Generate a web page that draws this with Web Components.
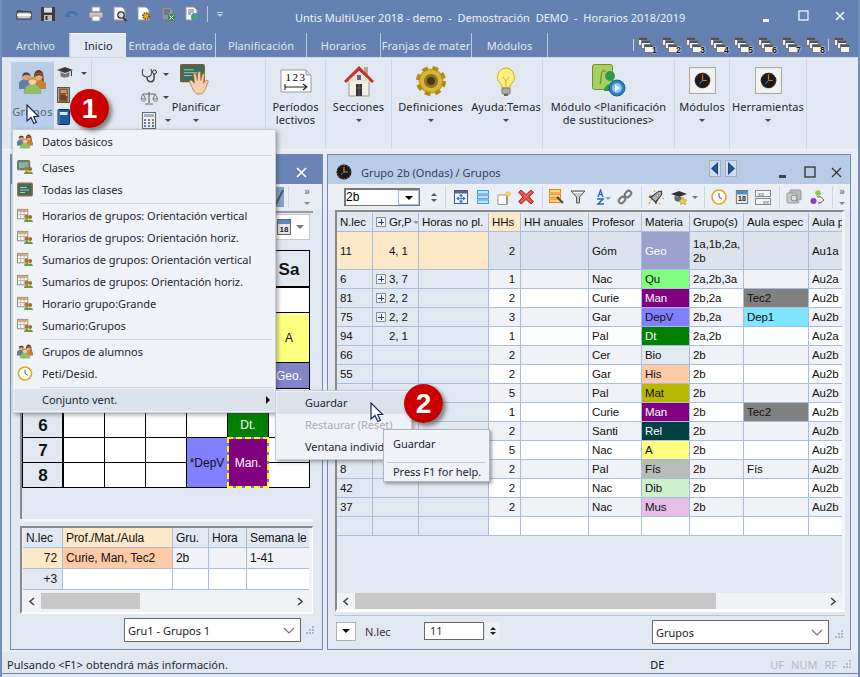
<!DOCTYPE html>
<html lang="es"><head><meta charset="utf-8"><title>Untis MultiUser</title>
<style>
html,body{margin:0;padding:0;background:#e2e8f1}
body{width:860px;height:677px;overflow:hidden;font:11px/13px "Noto Sans","Liberation Sans",sans-serif;color:#1c2733}
</style></head><body>
<x-app>
  <x-titlebar>
    <x-icon n="folder"></x-icon><x-icon n="save"></x-icon><x-icon n="undo"></x-icon><x-icon n="print"></x-icon><x-icon n="preview"></x-icon><x-icon n="docgear"></x-icon><x-icon n="docxl"></x-icon><x-icon n="docglobe"></x-icon>
    <span slot="title">Untis MultiUser 2018 - demo&nbsp; - &nbsp;Demostración&nbsp; DEMO&nbsp; - &nbsp;Horarios 2018/2019</span>
  </x-titlebar>
  <x-tabs>
    <x-tab style="width:64px;padding-right:4px">Archivo</x-tab>
    <x-tab active style="width:56px">Inicio</x-tab>
    <x-tab style="width:90px">Entrada de dato</x-tab>
    <x-tab style="width:91px">Planificación</x-tab>
    <x-tab style="width:74px">Horarios</x-tab>
    <x-tab style="width:91px">Franjas de mater</x-tab>
    <x-tab style="width:76px">Módulos</x-tab>
    <x-winlist slot="right"></x-winlist>
  </x-tabs>
  <x-ribbon>
    <x-rgroup style="width:88px">
      <x-groupbtn></x-groupbtn>
    </x-rgroup>
    <x-rgroup style="width:174px;justify-content:flex-start;padding-left:48px">
      <x-smallcol></x-smallcol>
      <x-rbtn label="Planificar" arrow icon="board" w="33" h="33" style="margin-left:-3px;width:60px"></x-rbtn>
    </x-rgroup>
    <x-rgroup style="width:60px"><x-rbtn label="Períodos|lectivos" icon="period" w="32" h="24"></x-rbtn></x-rgroup>
    <x-rgroup style="width:66px"><x-rbtn label="Secciones" arrow icon="house" w="30" h="32"></x-rbtn></x-rgroup>
    <x-rgroup style="width:151px">
      <x-rbtn label="Definiciones" arrow icon="gear" w="32" h="32" style="width:78px"></x-rbtn>
      <x-rbtn label="Ayuda:Temas" arrow icon="bulb" w="28" h="32" style="width:73px"></x-rbtn>
    </x-rgroup>
    <x-rgroup style="width:132px"><x-rbtn label="Módulo &lt;Planificación|de sustituciones&gt;" icon="module" w="34" h="33"></x-rbtn></x-rgroup>
    <x-rgroup style="width:55px"><x-rbtn label="Módulos" arrow icon="clockbox" w="27" h="27"></x-rbtn></x-rgroup>
    <x-rgroup style="width:77px"><x-rbtn label="Herramientas" arrow icon="clockbox" w="27" h="27"></x-rbtn></x-rgroup>
  </x-ribbon>
  <x-workspace>
    <x-mdi variant="left" style="width:313px">
      <x-wintitle slot="title" variant="left"></x-wintitle>
      <x-lefttool slot="tool"></x-lefttool>
      <x-leftbody></x-leftbody>
    </x-mdi>
    <x-mdi style="width:524px">
      <x-wintitle slot="title" text="Grupo 2b (Ondas) / Grupos" nav></x-wintitle>
      <x-righttool slot="tool"></x-righttool>
      <x-rightbody></x-rightbody>
    </x-mdi>
  </x-workspace>
  <x-status></x-status>

  <x-menu style="left:12px;top:129px;width:264px">
    <x-mi icon="people">Datos básicos</x-mi><x-msep></x-msep>
    <x-mi icon="classwin">Clases</x-mi><x-mi icon="boardsm">Todas las clases</x-mi><x-msep></x-msep>
    <x-mi icon="gridp">Horarios de grupos: Orientación vertical</x-mi>
    <x-mi icon="gridp">Horarios de grupos: Orientación horiz.</x-mi>
    <x-mi icon="gridp">Sumarios de grupos: Orientación vertical</x-mi>
    <x-mi icon="gridp">Sumarios de grupos: Orientación horiz.</x-mi>
    <x-mi icon="gridp">Horario grupo:Grande</x-mi>
    <x-mi icon="gridp">Sumario:Grupos</x-mi><x-msep></x-msep>
    <x-mi icon="people">Grupos de alumnos</x-mi>
    <x-mi icon="clock">Peti/Desid.</x-mi><x-msep></x-msep>
    <x-mi hot sub>Conjunto vent.</x-mi>
  </x-menu>
  <x-menu style="left:275px;top:390px;width:137px">
    <x-mi hot plain>Guardar</x-mi>
    <x-mi off plain>Restaurar (Reset)</x-mi>
    <x-mi plain>Ventana individual</x-mi>
  </x-menu>
  <x-tip style="left:383px;top:429px"></x-tip>
  <x-badge style="left:70px;top:89px">1</x-badge>
  <x-badge style="left:404px;top:384px">2</x-badge>
  <x-cursor style="left:26px;top:104px"></x-cursor>
  <x-cursor style="left:370px;top:402px"></x-cursor>
</x-app>

<script>
const svg=(w,h,s)=>`<svg xmlns="http://www.w3.org/2000/svg" viewBox="0 0 ${w} ${h}" width="100%" height="100%" style="display:block">${s}</svg>`;
const person=(x,y,r,skin,hair,body)=>`<path d="M${x-2*r} ${y+3*r}c0-${1.6*r} ${.8*r}-${2.3*r} ${2*r}-${2.3*r}s${2*r} ${.7*r} ${2*r} ${2.3*r}z" fill="${body}" stroke="#0004" stroke-width=".5"/><circle cx="${x}" cy="${y}" r="${r}" fill="${skin}" stroke="#0003" stroke-width=".4"/><path d="M${x-r} ${y+.3}a${r} ${r} 0 0 1 ${2*r} 0c-.3-1.600-${r}-1.800-${r}-1.800s-${.7*r} .2-${r} 1.800z" fill="${hair}"/>`;
const trio=person(7,6,4,"#d9a07a","#3c3c3c","#5f7fa8")+`<path d="M14.500 6c0-8 9-8 9 0 0 3 1 5-1 6h-7c-2-1-1-3-1-6z" fill="#6e3415"/>`+person(19,6.500,3.800,"#e3ab84","#6e3415","#d07f2c")+person(13,10.500,4,"#f6cfa6","#c89a38","#93c05c");
const grid=()=>`<rect x=".5" y="1.5" width="11" height="10" fill="#fff" stroke="#8a8a80"/><rect x="1" y="2" width="10" height="2.5" fill="#e0b070"/><path d="M4 2v9M7.5 2v9M1 7h10" stroke="#9a9a90" stroke-width=".7"/>`;
const smallp=`<circle cx="10" cy="9" r="2.1" fill="#b5702c"/><circle cx="14" cy="9.5" r="2.1" fill="#a07020"/><path d="M7.5 15c0-4 5-4 5-1.500 0-2 4.500-2 4.500 1.500z" fill="#6f9a38"/>`;
const I={
folder:svg(16,16,`<path d="M1 4h5l1 1h7v2H1z" fill="#555"/><rect x="1" y="6" width="14" height="7" fill="#ccc" stroke="#333"/><path d="M1 9h14" stroke="#fff" stroke-width="2"/>`),
save:svg(16,16,`<rect x="1" y="1" width="14" height="14" fill="#3a3a3a"/><rect x="4" y="1.500" width="8" height="5" fill="#ddd"/><rect x="4" y="9" width="8" height="6" fill="#bbb"/><rect x="5.500" y="10" width="2" height="4" fill="#333"/>`),
undo:svg(16,16,`<path d="M1 9c3-5 9-6 14 0l-3 1c-3-3-5-3-7-1l2 2H1z" fill="#4a6ea8"/>`),
print:svg(16,16,`<rect x="4" y="1" width="8" height="5" fill="#fff" stroke="#999"/><rect x="1" y="6" width="14" height="6" rx="1" fill="#c8c8c8" stroke="#777"/><rect x="4" y="10" width="8" height="5" fill="#fff" stroke="#999"/>`),
preview:svg(16,16,`<path d="M2 1h8l3 3v10H2z" fill="#fff" stroke="#999"/><circle cx="9" cy="9" r="3.200" fill="#cde" stroke="#333" stroke-width="1.300"/><path d="M11 11.500l3.500 3.500" stroke="#333" stroke-width="2"/>`),
docgear:svg(16,16,`<path d="M2 1h8l3 3v10H2z" fill="#fff" stroke="#999"/><circle cx="10" cy="10" r="3" fill="#e0b020" stroke="#805a10" stroke-width="2" stroke-dasharray="1.500 .8"/>`),
docxl:svg(16,16,`<path d="M2 1h8l3 3v10H2z" fill="#8b97a8" stroke="#777"/><path d="M4 4h6M4 6h6M4 8h4" stroke="#556" /><rect x="8" y="8" width="7" height="7" fill="#3d8a55"/><path d="M9.500 9.500l4 4M13.500 9.500l-4 4" stroke="#fff"/>`),
docglobe:svg(16,16,`<path d="M2 1h8l3 3v10H2z" fill="#fff" stroke="#999"/><path d="M4 4h6M4 6h6M4 8h3" stroke="#667"/><circle cx="11" cy="11" r="4" fill="#3f8fc9"/><path d="M8 10c2-2 3 0 4-1s2 2 1 3-3 2-3 0-2 0-2-2z" fill="#5aa83c"/>`),
people:svg(26,23,trio),
cap:svg(16,14,`<path d="M0 4l8-3 8 3-8 3z" fill="#3a3a3a"/><path d="M3.500 6v4c2 2 7 2 9 0V6l-4.500 2z" fill="#777"/><path d="M14.500 5v5" stroke="#333"/>`),
door:svg(13,16,`<rect x=".5" y=".5" width="12" height="15" fill="#aaa" stroke="#555"/><rect x="2" y="1.500" width="9" height="14" fill="#8a5a30"/><rect x="3.500" y="3" width="6" height="3" fill="#c59a6a"/><rect x="3.500" y="8" width="6" height="5" fill="#6f4520"/><circle cx="9.500" cy="8" r=".8" fill="#fd5"/>`),
book:svg(13,16,`<rect x="1" y=".5" width="11.500" height="15" rx="1" fill="#1e5c9e" stroke="#0a2f5a"/><rect x="3" y="3" width="7.500" height="3" fill="#d5e3f2"/><path d="M2 1v14" stroke="#5b93cc"/>`),
stetho:svg(18,16,`<path d="M3 2c-2 5 0 8 4 8s6-3 4-8" fill="none" stroke="#555" stroke-width="1.200"/><path d="M7 10c0 6 6 6 7 2V7" fill="none" stroke="#444" stroke-width="1.500"/><circle cx="14.500" cy="5" r="2" fill="#ddd" stroke="#333"/>`),
scale:svg(18,16,`<path d="M9 2v11M3 4h12M5 14h8" stroke="#666" stroke-width="1.200"/><path d="M3 4l-2 5h5zM15 4l-2 5h5z" fill="none" stroke="#777"/><path d="M1 9a2.500 2.500 0 0 0 5 0zM13 9a2.500 2.500 0 0 0 5 0z" fill="#c8ccd0" stroke="#777" stroke-width=".6"/>`),
calc:svg(14,17,`<rect x=".5" y=".5" width="13" height="16" fill="#eee" stroke="#666"/><rect x="2" y="2" width="10" height="3" fill="#9bb4d0"/><g fill="#6a7a90"><rect x="2" y="7" width="2" height="2"/><rect x="6" y="7" width="2" height="2"/><rect x="10" y="7" width="2" height="2" fill="#d06a3a"/><rect x="2" y="10" width="2" height="2"/><rect x="6" y="10" width="2" height="2"/><rect x="10" y="10" width="2" height="2" fill="#3aa060"/><rect x="2" y="13" width="2" height="2"/><rect x="6" y="13" width="2" height="2"/><rect x="10" y="13" width="2" height="2" fill="#3a70c0"/></g>`),
board:svg(34,34,`<rect x=".8" y="1" width="24" height="17" rx="1" fill="#3f6b5a" stroke="#7a5a36" stroke-width="1.800"/><path d="M4 6h10M4 9h14M4 12h8" stroke="#a8cbb8"/><path d="M11 21c-2-3-1-5 1-4l3 3-1-9c0-2 2-2 2.500 0l1.500 6 .5-8c.5-1.500 2.500-1.500 2.500 0l.5 8 1.500-6c.6-1.500 2.500-1 2.200.5L24 20l3-3c1.500-.8 2.500.5 1.800 1.800-1.500 3-2.300 8-4.800 10.500-3 3-8 2-10-2z" fill="#f3d0b0" stroke="#b5703c" stroke-width=".8"/>`),
period:svg(32,24,`<path d="M1 1h25l5 5v17H1z" fill="#fff" stroke="#999"/><path d="M26 1v5h5" fill="#ddd" stroke="#999"/><text x="16" y="12" text-anchor="middle" font-family="Liberation Serif" font-size="11" letter-spacing="1.500" fill="#000">123</text><path d="M5 18h21M23 15l4 3-4 3M5 15v6" fill="none" stroke="#222" stroke-width="1.100"/>`),
house:svg(30,32,`<rect x="20" y="2" width="4" height="8" fill="#bfa58c"/><path d="M5 15h20v16H5z" fill="#f0efe8" stroke="#999"/><path d="M0 16L15 1l15 15-2 2L15 6 2 18z" fill="#c23030"/><path d="M15 6L5 15v2h20v-2z" fill="#e8e4d8"/><rect x="12" y="19" width="6" height="12" fill="#333"/><rect x="13" y="10" width="4" height="5" fill="#667"/><path d="M12 23h6M15 19v12" stroke="#888" stroke-width=".6"/>`),
gear:svg(32,32,`<circle cx="16" cy="16" r="12.500" fill="#c9a227" stroke="#b08a18" stroke-width="5" stroke-dasharray="5.500 4.500"/><circle cx="16" cy="16" r="11" fill="#d8b43a"/><circle cx="16" cy="16" r="7" fill="#8a7428"/><circle cx="16" cy="16" r="4" fill="#473a12"/>`),
bulb:svg(28,32,`<g stroke="#f6ecb0" stroke-width="1"><path d="M14 0v3M3 5l3 3M25 5l-3 3M0 14h4M24 14h4M4 23l3-2M24 23l-3-2"/></g><path d="M14 3a9 9 0 0 0-5 16c1 1 1 3 1 4h8c0-1 0-3 1-4a9 9 0 0 0-5-16z" fill="#fdf07c" stroke="#d0a830"/><path d="M11 12l3 4 3-4M14 16v6" fill="none" stroke="#d89a20" stroke-width=".8"/><rect x="10" y="23" width="8" height="6" rx="1" fill="#aaa" stroke="#777"/><rect x="12" y="29" width="4" height="2" fill="#666"/>`),
module:svg(34,33,`<rect x=".5" y=".5" width="20" height="25" rx="2" fill="#a9d05e" stroke="#6b8f30"/><path d="M8 20c2-4 0-9 2-12 1-2 3-2 3 0" fill="none" stroke="#6b8f30" stroke-width="1.200"/><circle cx="18" cy="12" r="5" fill="#2e9a4a"/><path d="M12 27c0-9 12-9 12 0z" fill="#2e9a4a"/><circle cx="25" cy="24" r="8" fill="#2e7fc4" stroke="#1e5c98"/><circle cx="25" cy="24" r="5" fill="#8cc4ee"/><path d="M23 20.500l5 3.500-5 3.500z" fill="#fff"/>`),
clockbox:svg(26,26,`<rect x=".5" y=".5" width="25" height="25" fill="#f2f2f2" stroke="#aaa"/><circle cx="13" cy="13" r="7.500" fill="#1a1a1a"/><path d="M13 7v6h4" stroke="#d07820" stroke-width="1.200" fill="none"/><path d="M13 13l-3 3" stroke="#3878c8"/><circle cx="13" cy="13" r="7" fill="none" stroke="#6a4a2a" stroke-dasharray="1 2"/>`),
clockball:svg(16,16,`<circle cx="8" cy="8" r="7.500" fill="#1a1a1a"/><path d="M8 3v5h4" stroke="#e08020" stroke-width="1.200" fill="none"/><path d="M8 8l-3 3" stroke="#3878c8"/><circle cx="8" cy="8" r="6.500" fill="none" stroke="#8a6a3a" stroke-dasharray="1 2"/>`),
clock:svg(16,16,`<circle cx="8" cy="8" r="7" fill="#fff" stroke="#d8a820" stroke-width="1.600"/><path d="M8 4v4l3 2" stroke="#555" fill="none"/>`),
boardsm:svg(16,14,`<rect x=".8" y=".8" width="14.400" height="12.400" rx="1" fill="#3f6b5a" stroke="#8a6a40" stroke-width="1.400"/><path d="M3 5h7M3 7.500h9M3 10h5" stroke="#a8cbb8"/>`),
classwin:svg(17,16,`<rect x=".5" y=".5" width="13" height="10" rx="1" fill="#5a8a78" stroke="#7a6a50"/><rect x="2" y="2.500" width="10" height="6" fill="#8fb0a4"/>${smallp}`),
gridp:svg(17,16,grid()+smallp),
move:svg(14,14,`<rect x=".5" y=".5" width="13" height="13" fill="#eef3fa" stroke="#557"/><rect x="1" y="1" width="12" height="2.500" fill="#4a6a98"/><path d="M7 4.500v8M3 8.500h8M7 4.500L5.500 6h3zM7 12.500L5.500 11h3zM3 8.500l1.500-1.500v3zM11 8.500L9.500 7v3z" stroke="#2a70c0" fill="#2a70c0" stroke-width=".8"/>`),
rows:svg(12,14,`<g fill="#bfe3ff" stroke="#3fa0e0"><rect x=".5" y=".5" width="11" height="3.500"/><rect x=".5" y="5.200" width="11" height="3.500"/><rect x=".5" y="10" width="11" height="3.500"/></g>`),
newdoc:svg(15,15,`<path d="M1 5h9v9.500H1z" fill="#fff" stroke="#999"/><path d="M10 5v9" stroke="#666"/><circle cx="11" cy="4" r="2.200" fill="#ffe040" stroke="#f0a020" stroke-dasharray="1 .6"/>`),
redx:svg(16,16,`<path d="M3 1l5 4.500L13 1l2.500 2.500L11 8l4.500 4.500L13 15 8 10.500 3 15 .5 12.500 5 8 .5 3.500z" fill="#e04848" stroke="#b03030"/><path d="M3 3l10 10M13 3L3 13" stroke="#f08080" stroke-width=".8"/>`),
rowsedit:svg(16,16,`<g fill="#ffd080" stroke="#e88a10"><rect x=".5" y=".5" width="11" height="3.500"/><rect x=".5" y="5.200" width="11" height="3.500"/><rect x=".5" y="10" width="11" height="3.500"/></g><path d="M8 8l6 6" stroke="#444" stroke-width="2"/>`),
funnel:svg(16,14,`<path d="M1 1h14L9.500 7v6h-3V7z" fill="#ccc" stroke="#555"/><path d="M3 2.500h10" stroke="#fff"/>`),
sortaz:svg(16,16,`<path d="M3 8l2.500-7L8 8M4 5.500h3" fill="none" stroke="#2a6ab0" stroke-width="1.300"/><path d="M2 10h6l-5 5h6" fill="none" stroke="#2a6ab0" stroke-width="1.500"/><path d="M10 8h6l-3 3z" fill="#7aa8d8"/>`),
link:svg(16,16,`<g fill="none" stroke="#777" stroke-width="2"><rect x="1.500" y="8.500" width="7" height="5" rx="2.500" transform="rotate(-45 5 11)"/><rect x="7.500" y="2.500" width="7" height="5" rx="2.500" transform="rotate(-45 11 5)"/></g>`),
rocket:svg(16,16,`<g transform="rotate(45 8 8)"><path d="M8 0c3 2 3 5 3 8v4H5V8c0-3 0-6 3-8z" fill="#b4b4b4" stroke="#333"/><path d="M5 9l-2 4 2-1zM11 9l2 4-2-1z" fill="#555" stroke="#333" stroke-width=".6"/><circle cx="8" cy="6" r="1.300" fill="#fff" stroke="#333" stroke-width=".6"/></g><path d="M1 6l2 1M6 1l1 2M11 14l1 1.500M2 13l-1 2M4 11l-2 0M14 9l2 1" stroke="#e8a020" stroke-width="1.200"/>`),
capstar:svg(17,15,`<path d="M0 4l8-3 8 3-8 3z" fill="#333"/><path d="M3.500 6v4c2 2 5 2 7 1V7z" fill="#666"/><path d="M12 7l1.200 2.600 2.800.3-2 2 .6 2.800-2.600-1.400-2.600 1.400.6-2.800-2-2 2.800-.3z" fill="#f5d020" stroke="#a08010" stroke-width=".5"/>`),
cal:svg(14,16,`<rect x=".5" y=".5" width="13" height="15" fill="#e8e8e8" stroke="#666"/><rect x="1" y="1" width="12" height="4" fill="#5a8ac0"/><text x="7" y="13" text-anchor="middle" font-family="Liberation Sans" font-weight="700" font-size="8" fill="#222">18</text>`),
xx:svg(16,15,`<rect x=".5" y=".5" width="15" height="6" fill="#f4f4f4" stroke="#888"/><rect x=".5" y="8.500" width="15" height="6" fill="#f4f4f4" stroke="#888"/><text x="3" y="6" font-family="Liberation Sans" font-size="6" fill="#555">xx</text><text x="8" y="14" font-family="Liberation Sans" font-size="6" fill="#555">xx</text>`),
search:svg(16,16,`<rect x="4" y="1" width="11" height="10" rx="1" fill="#bbb" stroke="#999"/><rect x="1" y="4" width="10" height="10" rx="1" fill="#ccc" stroke="#999"/><circle cx="8" cy="9" r="3" fill="#ddd" stroke="#888"/><path d="M10 11l3 3" stroke="#999" stroke-width="1.500"/>`),
ballp:svg(15,15,`<circle cx="8" cy="3" r="2.800" fill="#8ccc3c"/><circle cx="3.500" cy="11" r="3" fill="#8a3cc0"/><path d="M7 7c4-1 5 1 7 3-2 2-3 3-6 3" fill="none" stroke="#555"/>`),
win:svg(16,16,`<rect x=".5" y=".5" width="9" height="8" fill="#eee" stroke="#777"/><rect x="1" y="1" width="8" height="2" fill="#456"/><rect x="3.500" y="3.500" width="9" height="8" fill="#eee" stroke="#777"/><rect x="4" y="4" width="8" height="2" fill="#456"/><rect x="6.500" y="7.500" width="9" height="8" fill="#f4f4f4" stroke="#777"/><rect x="7" y="8" width="8" height="2" fill="#456"/>`)
};
const tri=(c='#444',s=4)=>`<span style="display:inline-block;width:0;height:0;border:${s}px solid transparent;border-top:${s}px solid ${c};border-bottom:0"></span>`;
function def(name,css,html,init){customElements.define(name,class extends HTMLElement{connectedCallback(){if(this.shadowRoot)return;const r=this.attachShadow({mode:'open'});r.innerHTML=`<style>${css}</style>`+(typeof html==='function'?html(this):html);init&&init(this,r);}});}

def('x-icon',`:host{display:block;flex:none}`,h=>I[h.getAttribute('n')]||'',(h)=>{h.style.width=(h.getAttribute('w')||16)+'px';h.style.height=(h.getAttribute('h')||h.getAttribute('w')||16)+'px';});

def('x-app',`:host{display:flex;flex-direction:column;position:relative;width:860px;height:677px;background:#e2e8f1;overflow:hidden}
:host::after{content:"";position:absolute;left:0;right:0;top:0;bottom:0;border-left:2px solid #7390bb;border-right:2px solid #7390bb;pointer-events:none;z-index:9}`,`<slot></slot>`);

def('x-titlebar',`:host{display:flex;align-items:center;height:33px;flex:none;background:#6481b1;box-sizing:border-box;padding:0 0 5px 16px;color:#eef3fa}
.q{display:flex;gap:8px;width:191px;flex:none}.sep{width:1px;height:16px;background:#b9c8de;flex:none}.dd{margin-left:9px;flex:none;display:flex;flex-direction:column;align-items:center;gap:1px}
.dd i{display:block;width:6px;height:1px;background:#b9c8de}
.t{margin-left:72px;margin-top:6px;font-size:11px;white-space:nowrap;flex:none;width:388px}
.c{margin-left:auto;display:flex;align-items:center;width:110px;flex:none;height:16px;margin-top:4px}
.c svg{display:block;flex:none}`,
`<div class="q"><slot></slot></div><span class="sep"></span><span class="dd"><i></i>${tri('#b9c8de',3)}</span><span class="t"><slot name="title"></slot></span><span class="c"><svg width="10" height="4" style="margin:8px 0 0 13px"><rect y="1" width="6" height="3" fill="#fff"/></svg><svg width="12" height="12" style="margin-left:25px"><rect x="1" y="1" width="9" height="9" fill="none" stroke="#fff" stroke-width="1.200"/></svg><svg width="12" height="12" style="margin-left:24px"><path d="M2 2l8 8M10 2l-8 8" stroke="#fff" stroke-width="1.500"/></svg></span>`);

def('x-tabs',`:host{display:flex;height:24px;flex:none;background:#6481b1;padding-left:6px;position:relative;align-items:flex-end}.r{margin-left:auto}`,`<slot></slot><span class="r"><slot name="right"></slot></span>`);
def('x-tab',`:host{display:flex;align-items:center;justify-content:center;height:24px;box-sizing:border-box;color:#dfe8f4;font-size:11px;border-right:1px solid #bcc9dc;overflow:hidden;white-space:nowrap;flex:none;letter-spacing:.1px}
:host([active]){background:#e2e8f1;color:#1c2733;border-right:0;border-top:1px solid #f4f6fa;border-left:1px solid #d8e0ec}`,`<slot></slot>`);
def('x-winlist',`:host{display:flex;height:24px;align-items:center;padding-right:10px}.s{width:1px;height:12px;background:#c8d4e6}.w{position:relative;width:16px;height:16px;margin-left:8px}.w b{position:absolute;right:-3px;bottom:-2px;font:700 9px/9px "Liberation Sans";color:#111;text-shadow:0 0 1px #fff,0 0 1px #fff,0 0 2px #fff}`,
`<span class="s"></span>`+[1,2,3,4,5,6,7,8].map((n,i)=>`<span class="w" style="margin-left:${i?8:4}px"><x-icon n="win"></x-icon><b>${n}</b></span>`).join('')+`<span class="s" style="margin-left:6px"></span><span class="w" style="margin-left:5px"><x-icon n="win"></x-icon></span>`);

def('x-ribbon',`:host{display:flex;height:93px;flex:none;background:#e2e8f1;padding-left:4px;box-sizing:border-box;border-bottom:1px solid #f2f4f8;box-shadow:inset 0 1px 0 #cfd8e6}`,`<slot></slot>`);
def('x-rgroup',`:host{display:flex;flex:none;justify-content:center;box-sizing:border-box;border-right:1px solid #cdd5e0;height:90px;margin-top:2px}`,`<slot></slot>`);
def('x-rbtn',`:host{display:flex;flex-direction:column;align-items:center;flex:none;width:100%;letter-spacing:.08px;color:#1c2733;white-space:nowrap;text-align:center}
.i{height:41px;display:flex;align-items:center;justify-content:center;padding-top:2px;box-sizing:border-box}.l{line-height:13px}.a{margin-top:5px;line-height:0}`,
h=>`<div class="i"><x-icon n="${h.getAttribute('icon')}" w="${h.getAttribute('w')}" h="${h.getAttribute('h')}"></x-icon></div>`+h.getAttribute('label').split('|').map(t=>`<div class="l">${t.replace(/</g,'&lt;')}</div>`).join('')+(h.hasAttribute('arrow')?`<div class="a">${tri('#444',3)}</div>`:''));
def('x-groupbtn',`:host{display:flex;width:100%;position:relative;height:100%}
.g{width:43px;margin:3px 0 0 7px;background:#b9cde8;height:87px;display:flex;flex-direction:column;align-items:center;color:#56677c;letter-spacing:.45px;flex:none}
.g .p{margin-top:8px;height:30px}.g .l{margin-top:5px}
.s{margin-left:3px;display:flex;flex-direction:column}.r{display:flex;align-items:center;height:22px;gap:8px}`,
`<div class="g"><div class="p"><x-icon n="people" w="27" h="24"></x-icon></div><div class="l">Grupos</div></div><div class="s"><div class="r" style="margin-top:3px"><x-icon n="cap" w="16" h="14"></x-icon>${tri('#444',3)}</div><div class="r"><x-icon n="door" w="13" h="16"></x-icon></div><div class="r"><x-icon n="book" w="13" h="16"></x-icon></div></div>`);
def('x-smallcol',`:host{display:flex;flex-direction:column;padding-top:4px;flex:none;width:29px}.r{display:flex;align-items:center;gap:5px;height:23px}`,
`<div class="r"><x-icon n="stetho" w="18" h="16"></x-icon>${tri('#444',3)}</div><div class="r"><x-icon n="scale" w="18" h="16"></x-icon>${tri('#444',3)}</div><div class="r"><x-icon n="calc" w="14" h="17" style="margin:0 4px 0 2px;"></x-icon>${tri('#444',3)}</div>`);

def('x-workspace',`:host{display:flex;gap:4px;height:497px;flex:none;padding:4px 0 0 10px;background:#e8edf4;box-sizing:content-box}`,`<slot></slot>`);
def('x-mdi',`:host{display:flex;flex-direction:column;flex:none;box-sizing:border-box;height:496px;border:1px solid #6f8cb8;background:#e2e8f1;overflow:hidden}`,`<slot name="title"></slot><slot name="tool"></slot><slot></slot>`);
def('x-wintitle',`:host{display:flex;align-items:center;height:29px;flex:none;box-sizing:border-box;padding-top:5px;background:#b8cce6;color:#33405c;font-size:11px;padding-left:8px;white-space:nowrap}
:host([variant=left]){background:#6a85b5;color:#fff;padding-top:0}
.t{margin-left:9px;width:348px}.n{display:flex;gap:4px;width:70px;margin-top:-8px}.n span{width:12px;height:17px;box-sizing:border-box;border:1px solid #a8aeb8;background:#cddcf0;display:flex;align-items:center;justify-content:center}
.b{display:flex;align-items:center}.left{margin-left:auto;padding-right:15px}`,
h=>h.getAttribute('variant')==='left'?`<span class="left"><svg width="11" height="11" style="display:block;margin-top:6px"><path d="M1 1l9 9M10 1l-9 9" stroke="#fff" stroke-width="1.700"/></svg></span>`:
`<x-icon n="clockball"></x-icon><span class="t">${h.getAttribute('text')}</span><span class="n"><span><svg width="8" height="13"><path d="M7 0v13L0 6.500z" fill="#2233cc"/><path d="M6 3v7L2 6.500z" fill="#108010"/></svg></span><span><svg width="8" height="13"><path d="M1 0v13l7-6.500z" fill="#2233cc"/><path d="M2 3v7l4-3.500z" fill="#108010"/></svg></span></span><span class="b"><svg width="8" height="4" style="margin:7px 0 0 0"><rect y="1" width="7" height="3" fill="#444"/></svg><svg width="13" height="13" style="margin-left:17px"><rect x="1" y="1" width="10" height="10" fill="none" stroke="#333" stroke-width="1.300"/></svg><svg width="11" height="11" style="margin-left:14px"><path d="M1 1l9 9M10 1l-9 9" stroke="#333" stroke-width="1.300"/></svg></span>`);

const more=`<span style="display:flex;flex-direction:column;align-items:center;gap:6px;color:#778;font:700 10px/8px 'Liberation Sans';margin-top:-2px">»${tri('#888',3)}</span>`;
const sep=(l)=>`<span style="width:1px;height:22px;background:#ccd4df;margin-left:${l}px;flex:none"></span>`;
def('x-lefttool',`:host{display:flex;align-items:center;height:26px;flex:none;justify-content:flex-end;padding-right:12px;box-sizing:border-box;background:#e8edf4}
.h{width:8px;height:20px;background:#7ba2d0;margin-right:4px;overflow:hidden;display:block}`,`<span class="h"><svg width="8" height="20"><path d="M0 17L7 3" stroke="#555" stroke-width="2"/></svg></span>${sep(0)}<span style="margin-left:15px">${more}</span>`);
def('x-righttool',`:host{display:flex;align-items:center;height:26px;flex:none;box-sizing:border-box;background:#eaeff5;padding-left:16px}
.cb{display:flex;width:76px;height:18px;box-sizing:border-box;border:2px solid #777;border-right-width:1px;border-bottom-width:1px;background:#fff;font:12px/15px "Liberation Sans";color:#000;flex:none}
.cb i{flex:1;font-style:normal}.cb b{width:21px;background:#fff;border:1px solid #a8c0e0;box-sizing:border-box;display:flex;align-items:center;justify-content:center}
.sp{display:flex;flex-direction:column;gap:3px;margin-left:8px;width:12px;align-items:center;flex:none}
.up{border:3px solid transparent;border-bottom:3px solid #555;border-top:0;display:block;width:0}
x-icon{margin-left:var(--m,0)}`,
`<span class="cb"><i>2b</i><b>${tri('#000',4)}</b></span><span class="sp"><span class="up"></span>${tri('#555',3)}</span>${sep(5)}
<x-icon n="move" w="14" style="--m:8px"></x-icon><x-icon n="rows" w="12" h="14" style="--m:9px"></x-icon><x-icon n="newdoc" w="15" style="--m:8px"></x-icon><x-icon n="redx" style="--m:6px"></x-icon>${sep(8)}
<x-icon n="rowsedit" style="--m:6px"></x-icon><x-icon n="funnel" h="14" style="--m:5px"></x-icon><x-icon n="sortaz" style="--m:9px"></x-icon><x-icon n="link" style="--m:6px"></x-icon>${sep(8)}
<x-icon n="rocket" style="--m:6px"></x-icon><x-icon n="capstar" w="17" h="15" style="--m:7px"></x-icon><span style="margin-left:4px;line-height:0">${tri('#777',3)}</span>${sep(6)}
<x-icon n="clock" style="--m:6px"></x-icon><x-icon n="cal" w="14" style="--m:8px"></x-icon><x-icon n="xx" h="15" style="--m:6px"></x-icon>${sep(8)}
<x-icon n="search" style="--m:6px"></x-icon><x-icon n="ballp" w="15" style="--m:8px"></x-icon>${sep(7)}<span style="margin-left:6px">${more}</span>`);

const C={geo:'#9aa1cc',qu:'#80ff80',man:'#800080',dep:'#8080ff',dt:'#008000',bio:'#e2e8f1',his:'#ffcba6',mat:'#b8b800',rel:'#004040',a:'#ffff80',fis:'#b8bcb8',dib:'#cdf0cd',mus:'#e6bfe6'};
const TABLES={
right:{cols:[36,46,70,32,68,53,48,54,65,60],rows:[38],align:{3:'r'},left:3,
 head:['N.lec',{t:'Gr,P',plus:1,dd:1},'Horas no pl.',{t:'HHs',bg:'#fde8c8'},'HH anuales','Profesor','Materia','Grupo(s)','Aula espec','Aula p'],
 data:[
 {hl:1,c:['11',{t:'4, 1',ind:1},'','2','','Góm',{t:'Geo',bg:C.geo,c:'#fff'},'1a,1b,2a, 2b','','Au1a']},
 {c:['6',{t:'3, 7',plus:1},'','1','','Nac',{t:'Qu',bg:C.qu},'2a,2b,3a','','Au2a']},
 {c:['81',{t:'2, 2',plus:1},'','2','','Curie',{t:'Man',bg:C.man,c:'#fff'},'2b,2a',{t:'Tec2',bg:'#808080'},'Au2b']},
 {c:['75',{t:'2, 2',plus:1},'','3','','Gar',{t:'DepV',bg:C.dep},'2b,2a',{t:'Dep1',bg:'#80e5ff'},'Au2b']},
 {c:['94',{t:'2, 1',ind:1},'','1','','Pal',{t:'Dt',bg:C.dt,c:'#fff'},'2a,2b','','Au2a']},
 {c:['66','','','2','','Cer',{t:'Bio',bg:C.bio},'2b','','Au2b']},
 {c:['55','','','2','','Gar',{t:'His',bg:C.his},'2b','','Au2b']},
 {c:['','','','5','','Pal',{t:'Mat',bg:C.mat},'2b','','Au2b']},
 {c:['','','','1','','Curie',{t:'Man',bg:C.man,c:'#fff'},'2b',{t:'Tec2',bg:'#808080'},'Au2b']},
 {c:['','','','2','','Santi',{t:'Rel',bg:C.rel,c:'#fff'},'2b','','Au2b']},
 {c:['','','','5','','Nac',{t:'A',bg:C.a},'2b','','Au2b']},
 {c:['8','','','2','','Pal',{t:'Fís',bg:C.fis},'2b','Fís','Au2b']},
 {c:['42','','','2','','Nac',{t:'Dib',bg:C.dib},'2b','','Au2b']},
 {c:['37','','','2','','Nac',{t:'Mus',bg:C.mus},'2b','','Au2b']},
 {c:['','','','','','','','','','']}
 ]},
left:{cols:[40,110,36,38,70],rowH:21,headH:20,align:{0:'r'},left:1,
 head:['N.lec',{t:'Prof./Mat./Aula',bg:'#fde8c8'},'Gru.','Hora','Semana le'],
 data:[
 {c:[{t:'72',bg:'#fde8c8'},{t:'Curie, Man, Tec2',bg:'#ffcba6'},'2b','','1-41']},
 {c:['+3','','','','']}
 ]}
};
def('x-table',`:host{display:block;overflow:hidden;font:12px/14px "Liberation Sans",sans-serif;color:#111;letter-spacing:-.08px}
.g{display:grid;width:max-content}
.c{box-sizing:border-box;border-right:1px solid #a9bcd9;border-bottom:1px solid #a9bcd9;padding:0 3px;display:flex;align-items:center;white-space:nowrap;overflow:hidden}
.r{justify-content:flex-end;padding-right:5px}.w{white-space:normal}
.pl{width:10px;height:10px;box-sizing:border-box;border:1px solid #8a8f98;background:#f4f4f4;margin:0 3px 0 0;position:relative;flex:none}
.pl:before{content:"";position:absolute;left:1px;right:1px;height:1px;top:3.5px;background:#26418a}
.pl:after{content:"";position:absolute;top:1px;bottom:1px;left:3.5px;width:1px;background:#26418a}
.in{padding-left:16px}.dd{margin-left:1px;line-height:0;flex:none}`,h=>{
 const id=h.getAttribute('data'),d=TABLES[id];const hH=d.headH||19,rH=d.rowH||19;
 let o=`<div class="g" style="grid-template-columns:${d.cols.map(c=>c+'px').join(' ')};grid-auto-rows:${rH}px;grid-template-rows:${hH}px ${d.rows?d.rows.map(r=>r+'px').join(' '):''}">`;
 d.head.forEach((c)=>{const x=typeof c==='string'?{t:c}:c;o+=`<div class="c" style="background:${x.bg||'#e2e8f1'}">${x.plus?'<span class="pl"></span>':''}${x.t}${x.dd?'<span class="dd">'+tri('#8a9ab0',3)+'</span>':''}</div>`;});
 d.data.forEach((r,ri)=>{r.c.forEach((c,i)=>{const x=typeof c==='string'?{t:c}:c;let bg=x.bg;
   if(!bg){if(i<d.left)bg=r.hl?'#fde8c8':'#e2e8f1';else bg=r.hl?'#dde3ec':(d.left===1?(ri===0?'#f0f2f7':'#fff'):(ri%2===1?'#f0f2f7':'#fff'));}
   if(id==='right'&&ri===14&&i>=d.left)bg='#fff';
   const cls=['c'];if(d.align[i])cls.push('r');if(x.ind)cls.push('in');if(r.hl&&i===7)cls.push('w');
   o+=`<div class="${cls.join(' ')}" style="background:${bg};${x.c?'color:'+x.c+';':''}">${x.plus?'<span class="pl"></span>':''}${x.t}</div>`;});});
 return o+'</div>';});

def('x-scroll',`:host{display:flex;align-items:center;height:16px;background:#f0f2f6;position:relative;flex:none}
.a{width:17px;display:flex;justify-content:center;flex:none}.t{flex:1;height:100%;position:relative}.th{position:absolute;top:0;bottom:0;background:#c8c8c8}`,
h=>`<span class="a"><svg width="7" height="9"><path d="M6 1L2 4.500 6 8" fill="none" stroke="#444" stroke-width="1.600"/></svg></span><span class="t"><span class="th" style="left:${h.getAttribute('l')}px;width:${h.getAttribute('w')}px"></span></span><span class="a"><svg width="7" height="9"><path d="M1 1l4 3.500L1 8" fill="none" stroke="#444" stroke-width="1.600"/></svg></span>`);
def('x-combo',`:host{display:flex;align-items:center;box-sizing:border-box;height:24px;border:1px solid #6a6a6a;background:#fff;padding:0 3px;color:#222;font-size:11px;flex:none;justify-content:space-between}`,
`<slot></slot><svg width="12" height="7" style="margin-right:2px"><path d="M1 1l5 5 5-5" fill="none" stroke="#777" stroke-width="1.200"/></svg>`);
const gripS=`<svg width="9" height="9" style="display:block;flex:none"><g fill="#b0b8c4"><rect x="6" y="0" width="2" height="2"/><rect x="3" y="3" width="2" height="2"/><rect x="6" y="3" width="2" height="2"/><rect x="0" y="6" width="2" height="2"/><rect x="3" y="6" width="2" height="2"/><rect x="6" y="6" width="2" height="2"/></g></svg>`;

def('x-tgrid',`:host{display:grid;width:288px;box-sizing:border-box;background:#000;padding:1px;gap:1px;grid-template-columns:repeat(7,40px);grid-template-rows:36px 24px 49px 25px 23px 24px 24px 24px;font:12px/14px "Liberation Sans";flex:none}
.c{background:#fff;display:flex;align-items:center;justify-content:center;white-space:nowrap}.h{background:#e2e8f1;font:700 17px/17px "Liberation Sans";color:#111}
.hc{box-shadow:inset -1px 0 #000}.hr{box-shadow:inset 0 -1px #000}
.man{background:linear-gradient(#800080,#800080) padding-box,linear-gradient(#7a6ae0,#7a6ae0) border-box;border:2px dashed #ff0;color:#fff;box-sizing:border-box;margin:-1px}`,
()=>{let o='';
 const cell=(r,c,rs,cls,bg,col,t)=>`<div class="c ${cls}" style="grid-area:${r}/${c}/span ${rs}/span 1;${bg?'background:'+bg+';':''}${col?'color:'+col+';':''}">${t||''}</div>`;
 for(let r=1;r<=8;r++){for(let c=1;c<=7;c++){
   if(r>=7&&(c===5||c===6))continue;
   if(r===6&&c===6){o+=cell(6,6,1,'','#008000','#fff','Dt.');continue;}
   if(r===1){o+=cell(1,c,1,'h hr','','',c===7?'Sa':'');continue;}
   if(c===1){o+=cell(r,1,1,'h hc','','',r>=6?String(r):'');continue;}
   if(c===7&&r===3){o+=cell(3,7,1,'','#ffff80','#111','A');continue;}
   if(c===7&&r===4){o+=cell(4,7,1,'','#7f85c5','#fff','Geo.');continue;}
   o+=cell(r,c,1,'');
 }}
 o+=cell(7,5,2,'','#8080ff','#111','*DepV');o+=cell(7,6,2,'man','','','Man.');
 return o;});

def('x-leftbody',`:host{display:flex;flex-direction:column;flex:1;min-height:0;padding:1px 0 0 9px}
.p{width:293px;height:308px;box-sizing:border-box;border-top:2px solid #9a9a9a;border-left:2px solid #8a8a8a;flex:none;display:flex;flex-direction:column}
.cb{align-self:flex-end;width:39px;height:26px;box-sizing:border-box;border:1px solid #c0c6d0;background:#fff;margin:1px 3px 0 0;display:flex;align-items:center;gap:5px;padding-left:5px;flex:none}
.gr{margin-top:10px}
.w{height:3px;background:#f2f4f8;width:293px;flex:none}
.t{margin-top:4px;width:293px;box-sizing:border-box;border-top:2px solid #8a8a8a;border-left:2px solid #8a8a8a;border-right:1px solid #fff;flex:none;padding:0 0 2px 1px;background:#f0f2f6;border-bottom:2px solid #fff;height:88px}
x-table{width:286px;height:62px}
.f{display:flex;align-items:center;margin-top:4px;padding-left:104px;gap:5px}
x-scroll{width:286px;margin-top:3px}`,
`<div class="p"><div class="cb"><x-icon n="cal" w="14" h="16"></x-icon>${tri('#777',4)}</div><x-tgrid class="gr"></x-tgrid></div><div class="w"></div>
<div class="t"><x-table data="left"></x-table><x-scroll l="1" w="99"></x-scroll></div>
<div class="f"><x-combo style="width:177px">Gru1 - Grupos 1</x-combo>${gripS}</div>`);

def('x-rightbody',`:host{display:flex;flex-direction:column;flex:1;min-height:0;padding:0 0 0 7px}
.p{width:510px;height:402px;box-sizing:border-box;border-top:2px solid #8a8a8a;border-left:2px solid #8a8a8a;flex:none;display:flex;flex-direction:column;padding:1px 0 0 0;border-right:3px solid #f2f4f8;border-bottom:3px solid #fff}
x-table{flex:none;height:323px;font-size:11.5px}
.gap{flex:1}
.line{height:1px;background:#bcc4cf;width:510px;margin-top:3px;flex:none}
.f{display:flex;align-items:center;height:30px;flex:none;color:#3a3040}
.dn{width:20px;height:19px;box-sizing:border-box;border:1px solid #a9b2bc;background:#fff;display:flex;align-items:center;justify-content:center;margin-left:1px}
.nl{margin-left:9px;width:59px}
.in{width:60px;height:18px;box-sizing:border-box;border:1px solid #6a6a6a;background:#fff;padding-left:5px;line-height:15px;color:#333;flex:none}
.sp{width:15px;height:18px;margin-left:1px;display:flex;flex-direction:column;justify-content:center;gap:2px;align-items:center;background:#eef1f5;border:1px solid #e9edf3;box-sizing:border-box}
.up{border:3px solid transparent;border-bottom:3px solid #222;border-top:0;display:block;width:0}
x-combo{width:177px;margin-left:152px;height:24px;margin-top:2px}`,
`<div class="p"><x-table data="right"></x-table><div class="gap"></div><x-scroll l="1" w="361"></x-scroll></div><div class="line"></div>
<div class="f"><span class="dn">${tri('#000',4)}</span><span class="nl">N.lec</span><span class="in">11</span><span class="sp"><span class="up"></span>${tri('#222',3)}</span><x-combo>Grupos</x-combo><span style="margin-left:6px;margin-top:6px">${gripS}</span></div>`);

def('x-status',`:host{display:flex;align-items:center;height:23px;flex:none;box-sizing:border-box;padding:3px 8px 0 7px;background:#e2e8f1;border-bottom:1px solid #6a88b8;border-top:1px solid #eef1f6;letter-spacing:.05px;color:#1c2733}
.d{margin-left:407px;width:122px;color:#111;letter-spacing:0}.m{color:#b4bcc4;letter-spacing:0}`,
`<span style="width:240px;white-space:nowrap">Pulsando &lt;F1&gt; obtendrá más información.</span><span class="d">DE</span><span class="m">UF</span><span class="m" style="margin-left:7px">NUM</span><span class="m" style="margin-left:7px">RF</span><span style="margin-left:6px">${gripS}</span>`);

def('x-menu',`:host{position:absolute;display:block;box-sizing:border-box;background:#f0f2f7;border:1px solid #c6ccd6;padding:1px;box-shadow:2px 2px 4px rgba(60,60,60,.45);z-index:5}`,`<slot></slot>`);
def('x-mi',`:host{display:flex;align-items:center;height:22px;box-sizing:border-box;padding-bottom:2px;letter-spacing:-.04px;color:#1c2733;white-space:nowrap;position:relative}
:host([hot]){background:#dbe2ec}:host([off]){color:#a8adb5}
.i{width:28px;padding-left:3px;box-sizing:border-box;flex:none}.p{width:28px;flex:none}
.ar{position:absolute;right:4px;top:7px;width:0;height:0;border:4px solid transparent;border-left:4px solid #111;border-right:0}`,
h=>(h.hasAttribute('plain')?`<span class="p"></span>`:`<span class="i">${h.getAttribute('icon')?`<x-icon n="${h.getAttribute('icon')}" w="16" h="15"></x-icon>`:''}</span>`)+`<slot></slot>`+(h.hasAttribute('sub')?'<span class="ar"></span>':''));
def('x-msep',`:host{display:block;height:1px;margin:1.5px 2px 1.5px 26px;padding:0;background:#cfd5de}`,``);
def('x-tip',`:host{position:absolute;z-index:6;box-sizing:border-box;width:107px;height:53px;background:#f0f2f7;border:1px solid #b0b6c0;box-shadow:2px 2px 3px rgba(60,60,60,.45);letter-spacing:-.04px;color:#1c2733;display:block;white-space:nowrap}
.a{padding:7px 0 0 9px;height:32px;box-sizing:border-box}.s{height:1px;background:#c0c6d0;margin:0 3px}.b{padding:2px 0 0 9px}`,`<div class="a">Guardar</div><div class="s"></div><div class="b">Press F1 for help.</div>`);
def('x-badge',`:host{position:absolute;z-index:7;width:39px;height:39px;border-radius:50%;background:radial-gradient(circle at 45% 40%,#cc0000 55%,#8e0000 100%);color:#fff;font:700 28px/39px "Liberation Sans",sans-serif;text-align:center;box-shadow:3px 3px 4px rgba(40,40,40,.55);display:block}`,`<slot></slot>`);
def('x-cursor',`:host{position:absolute;z-index:8;width:14px;height:21px;display:block}`,`<svg width="14" height="21"><path d="M1 1v16l4-3.500 2.800 6 2.600-1.200-2.700-5.800h5z" fill="#fff" stroke="#1a2a58" stroke-width="1.200"/></svg>`);
</script>
</body></html>
